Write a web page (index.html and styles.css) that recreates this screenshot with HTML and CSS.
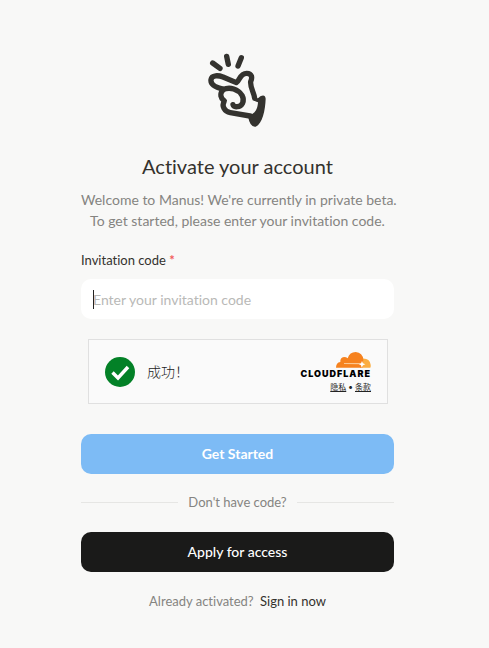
FILE: index.html
```html
<!DOCTYPE html>
<html lang="en">
<head>
<meta charset="utf-8">
<title>Activate your account</title>
<link rel="stylesheet" href="styles.css">
</head>
<body>
<main class="panel">
  <svg class="logo" viewBox="0 0 255 270" aria-hidden="true">
    <g fill="none" stroke="#34332f" stroke-width="16" stroke-linecap="round" stroke-linejoin="round">
      <path d="M53 54L75 70M95 34L100 58M139 38L129 63"/>
      <path d="M84 132C66 128 46 119 48 104C50 89 71 91 84 96L124 113C134 108 134 85 155 85C172 85 172 99 167 110C165 128 178 145 179 160"/>
      <path d="M84 134C105 124 130 133 141 151C151 170 140 184 127 185C119 186 115 183 114 179"/>
      <path d="M84 134C73 147 77 160 88 168C79 183 88 200 106 203L165 213"/>
    </g>
    <path fill="#34332f" d="M173 158Q187 165 196 154Q210 146 212 161C211 195 202 237 182 245Q165 248 159 214C175 205 187 202 189 172Q176 170 173 158Z"/>
  </svg>
  <h1 class="title">Activate your account</h1>
  <p class="intro">Welcome to Manus! We're currently in private beta.<br>To get started, please enter your invitation code.</p>
  <form class="form">
    <label class="label" for="code">Invitation code <span class="required">*</span></label>
    <div class="field">
      <input class="input" id="code" type="text" placeholder="Enter your invitation code">
      <span class="caret"></span>
    </div>
    <div class="captcha" lang="zh-CN">
      <svg class="check" viewBox="0 0 30 30" aria-hidden="true"><circle cx="15" cy="15" r="15" fill="#038127"/><path d="M7.5 15.500L13 21L23 10" fill="none" stroke="#fff" stroke-width="3.400"/></svg>
      <span class="success">成功！</span>
      <div class="brand">
        <svg class="cloud" viewBox="0 0 105 48" aria-hidden="true">
          <path fill="#fbad41" d="M72 47L78 20Q101 18 104 38Q105 43 103 47Z"/>
          <path fill="#f6821f" d="M0 47Q0 32 13 30Q12 17 24 15Q31 15 35 19Q41 0 59 0Q80 2 82 23L79 47Z"/>
          <path fill="#fcc790" d="M24 33L74 33L74 37L24 36Z"/>
          <path fill="#fff" d="M78 27L81 34L88 37L81 40L77 47L75 40L69 37L75 34Z"/>
        </svg>
        <span class="wordmark">CLOUDFLARE</span>
        <span class="terms"><a href="#">隐私</a> • <a href="#">条款</a></span>
      </div>
    </div>
    <button class="button primary" type="submit">Get Started</button>
  </form>
  <div class="divider">Don't have code?</div>
  <button class="button dark" type="button">Apply for access</button>
  <p class="signin">Already activated? <a href="#">Sign in now</a></p>
</main>
</body>
</html>
```
FILE: styles.css
```css
* { box-sizing: border-box; }
body {
  margin: 0;
  padding: 45px 95px 32px 81px;
  background: #f8f8f7;
  color: #34322d;
  font-family: Lato, "Noto Sans CJK SC", sans-serif;
  font-size: 14px;
  font-variant-ligatures: none;
}
.panel { max-width: 400px; margin: 0 auto; }
.logo { display: block; width: 85px; height: 90px; margin: 0 auto; }
.title { margin: 17px 0 9px; font-size: 20px; line-height: 28px; font-weight: 400; text-align: center; }
.intro { margin: 0 0 20px; line-height: 21px; color: #858481; text-align: center; white-space: nowrap; }
.form { display: flex; flex-direction: column; }
.label { font-size: 13px; line-height: 18px; margin-bottom: 10px; }
.required { color: #f25a5a; font-weight: 700; }
.field { position: relative; }
.input {
  display: block;
  width: 100%;
  height: 40px;
  padding: 0 12px;
  border: 0;
  border-radius: 10px;
  outline: 0;
  background: #fff;
  font: inherit;
}
.input::placeholder { color: #b9b9b7; }
.caret { position: absolute; left: 12px; top: 11px; width: 1px; height: 19px; background: #222; }
.captcha {
  display: flex;
  align-items: center;
  margin: 20px 6px 30px 7px;
  height: 65px;
  padding: 0 16px;
  border: 1px solid #e0e0e0;
  background: #fafafa;
}
.check { width: 30px; height: 30px; margin-right: 12px; }
.success { color: #232323; line-height: 20px; font-weight: 300; }
.brand { display: flex; flex-direction: column; align-items: flex-end; margin-left: auto; padding-top: 2px; }
.cloud { width: 35px; height: 16px; }
.wordmark { font: 900 9px/12px Inter, sans-serif; letter-spacing: 1px; color: #000; }
.terms { font-size: 8px; line-height: 14px; color: #232323; }
.terms a { color: inherit; }
.button {
  width: 100%;
  height: 40px;
  padding: 0 0 1px;
  border: 0;
  border-radius: 10px;
  color: #fff;
  font: inherit;
  font-weight: 500;
}
.primary { background: #7dbbf5; font-weight: 700; }
.dark { background: #1a1a19; }
.divider {
  display: flex;
  align-items: center;
  gap: 10px;
  margin: 19px 0 21px;
  font-size: 13px;
  line-height: 18px;
  color: #858481;
}
.divider::before, .divider::after { content: ""; flex: 1; height: 1px; background: #e6e6e4; }
.signin { margin: 20px 0 0; font-size: 13px; line-height: 18px; text-align: center; color: #858481; }
.signin a { margin-left: 3px; color: #34322d; text-decoration: none; }
```
